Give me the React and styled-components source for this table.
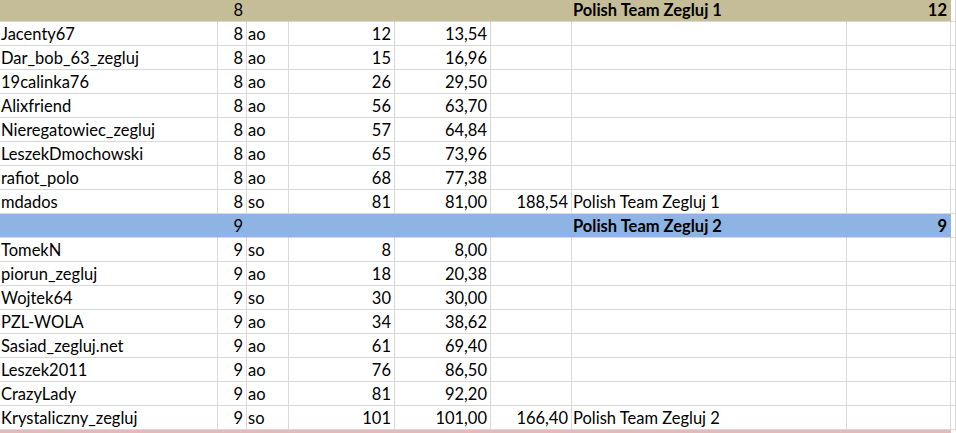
import styled, { createGlobalStyle } from 'styled-components'

const GlobalStyle = createGlobalStyle`
  html, body {
    margin: 0;
    padding: 0;
    background: #fff;
    overflow: hidden;
  }
  body {
    font-family: Lato, "Liberation Sans", sans-serif;
    font-size: 16.5px;
    color: #000;
  }
`

const COLS = '218px 29px 42px 106px 96px 81px 275px 104px 1fr'

const teams = [
  {
    group: '8',
    name: 'Polish Team Zegluj 1',
    place: '12',
    color: '#c4bd97',
    rows: [
      ['Jacenty67', '8', 'ao', '12', '13,54'],
      ['Dar_bob_63_zegluj', '8', 'ao', '15', '16,96'],
      ['19calinka76', '8', 'ao', '26', '29,50'],
      ['Alixfriend', '8', 'ao', '56', '63,70'],
      ['Nieregatowiec_zegluj', '8', 'ao', '57', '64,84'],
      ['LeszekDmochowski', '8', 'ao', '65', '73,96'],
      ['rafiot_polo', '8', 'ao', '68', '77,38'],
      ['mdados', '8', 'so', '81', '81,00', '188,54', 'Polish Team Zegluj 1'],
    ],
  },
  {
    group: '9',
    name: 'Polish Team Zegluj 2',
    place: '9',
    color: '#8db4e2',
    rows: [
      ['TomekN', '9', 'so', '8', '8,00'],
      ['piorun_zegluj', '9', 'ao', '18', '20,38'],
      ['Wojtek64', '9', 'so', '30', '30,00'],
      ['PZL-WOLA', '9', 'ao', '34', '38,62'],
      ['Sasiad_zegluj.net', '9', 'ao', '61', '69,40'],
      ['Leszek2011', '9', 'ao', '76', '86,50'],
      ['CrazyLady', '9', 'ao', '81', '92,20'],
      ['Krystaliczny_zegluj', '9', 'so', '101', '101,00', '166,40', 'Polish Team Zegluj 2'],
    ],
  },
]

function Sheet() {
  return (
    <Grid>
      {teams.map((t) => (
        <Group key={t.group}>
          <Row $bg={t.color}>
            <Cell $plain />
            <Cell $plain $right>{t.group}</Cell>
            <Cell $plain />
            <Cell $plain />
            <Cell $plain />
            <Cell $plain />
            <Cell $plain $bold>{t.name}</Cell>
            <Cell $plain $right $bold>{t.place}</Cell>
            <Cell $edge />
          </Row>
          {t.rows.map((r) => (
            <Row key={r[0]}>
              <Cell>{r[0]}</Cell>
              <Cell $right>{r[1]}</Cell>
              <Cell>{r[2]}</Cell>
              <Cell $right>{r[3]}</Cell>
              <Cell $right>{r[4]}</Cell>
              <Cell $right>{r[5] || ''}</Cell>
              <Cell>{r[6] || ''}</Cell>
              <Cell />
              <Cell $edge />
            </Row>
          ))}
        </Group>
      ))}
      <PageBreak />
    </Grid>
  )
}

export default function App() {
  return (
    <>
      <GlobalStyle />
      <Sheet />
    </>
  )
}

const Grid = styled.div`
  margin-top: -2px;
  width: 956px;
`

const Group = styled.div`
  display: flex;
  flex-direction: column;
`

const Row = styled.div`
  display: grid;
  grid-template-columns: ${COLS};
  height: 24px;
  background: ${(p) => p.$bg || '#fff'};
  box-sizing: border-box;
`

const Cell = styled.div`
  box-sizing: border-box;
  border-right: 1px solid ${(p) => (p.$plain ? 'transparent' : '#d9d9d9')};
  border-bottom: 1px solid #d9d9d9;
  padding: 2px 3px 0 1px;
  line-height: 21px;
  white-space: nowrap;
  text-align: ${(p) => (p.$right ? 'right' : 'left')};
  font-weight: ${(p) => (p.$bold ? 700 : 400)};
  background: ${(p) => (p.$edge ? '#fff' : 'transparent')};
`

const PageBreak = styled.div`
  width: 951px;
  height: 3px;
  background: #e6b8b7;
`
